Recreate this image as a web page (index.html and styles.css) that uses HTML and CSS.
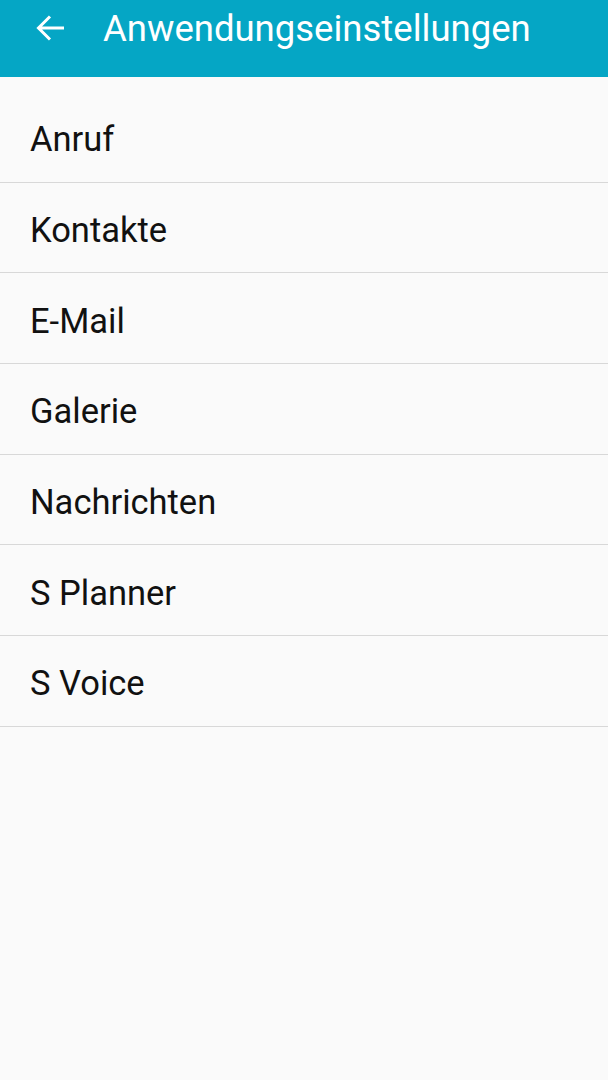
FILE: index.html
```html
<!DOCTYPE html>
<html lang="de">
<head>
<meta charset="utf-8">
<link rel="stylesheet" href="styles.css">
</head>
<body>
<header class="appbar">
  <svg class="back" width="32" height="32" viewBox="0 0 32 32" aria-hidden="true">
    <path d="M29 16H4M15 4.5L3.5 16L15 27.5" fill="none" stroke="#fff" stroke-width="3" stroke-linecap="butt" stroke-linejoin="miter"/>
  </svg>
  <h1 class="title">Anwendungseinstellungen</h1>
</header>
<ul class="list">
  <li class="item">Anruf</li>
  <li class="item">Kontakte</li>
  <li class="item">E-Mail</li>
  <li class="item">Galerie</li>
  <li class="item">Nachrichten</li>
  <li class="item">S Planner</li>
  <li class="item">S Voice</li>
</ul>
</body>
</html>
```
FILE: styles.css
```css
html, body {
  margin: 0;
  padding: 0;
  background: #fafafa;
  font-family: Roboto, "Noto Sans", sans-serif;
}
.appbar {
  height: 77px;
  background: #05a6c5;
  display: flex;
  align-items: center;
  padding-left: 35px;
  padding-bottom: 21px;
  box-sizing: border-box;
  gap: 36px;
}
.back {
  flex: none;
}
.title {
  margin: 0;
  font-weight: 400;
  font-size: 36.5px;
  color: #fff;
}
.list {
  list-style: none;
  margin: 0;
  padding: 15px 0 0 0;
}
.item {
  height: 90.67px;
  box-sizing: border-box;
  border-bottom: 1px solid #d8d8d8;
  display: flex;
  align-items: center;
  padding-left: 30px;
  padding-top: 5px;
  font-size: 34.5px;
  color: #111;
}
```
